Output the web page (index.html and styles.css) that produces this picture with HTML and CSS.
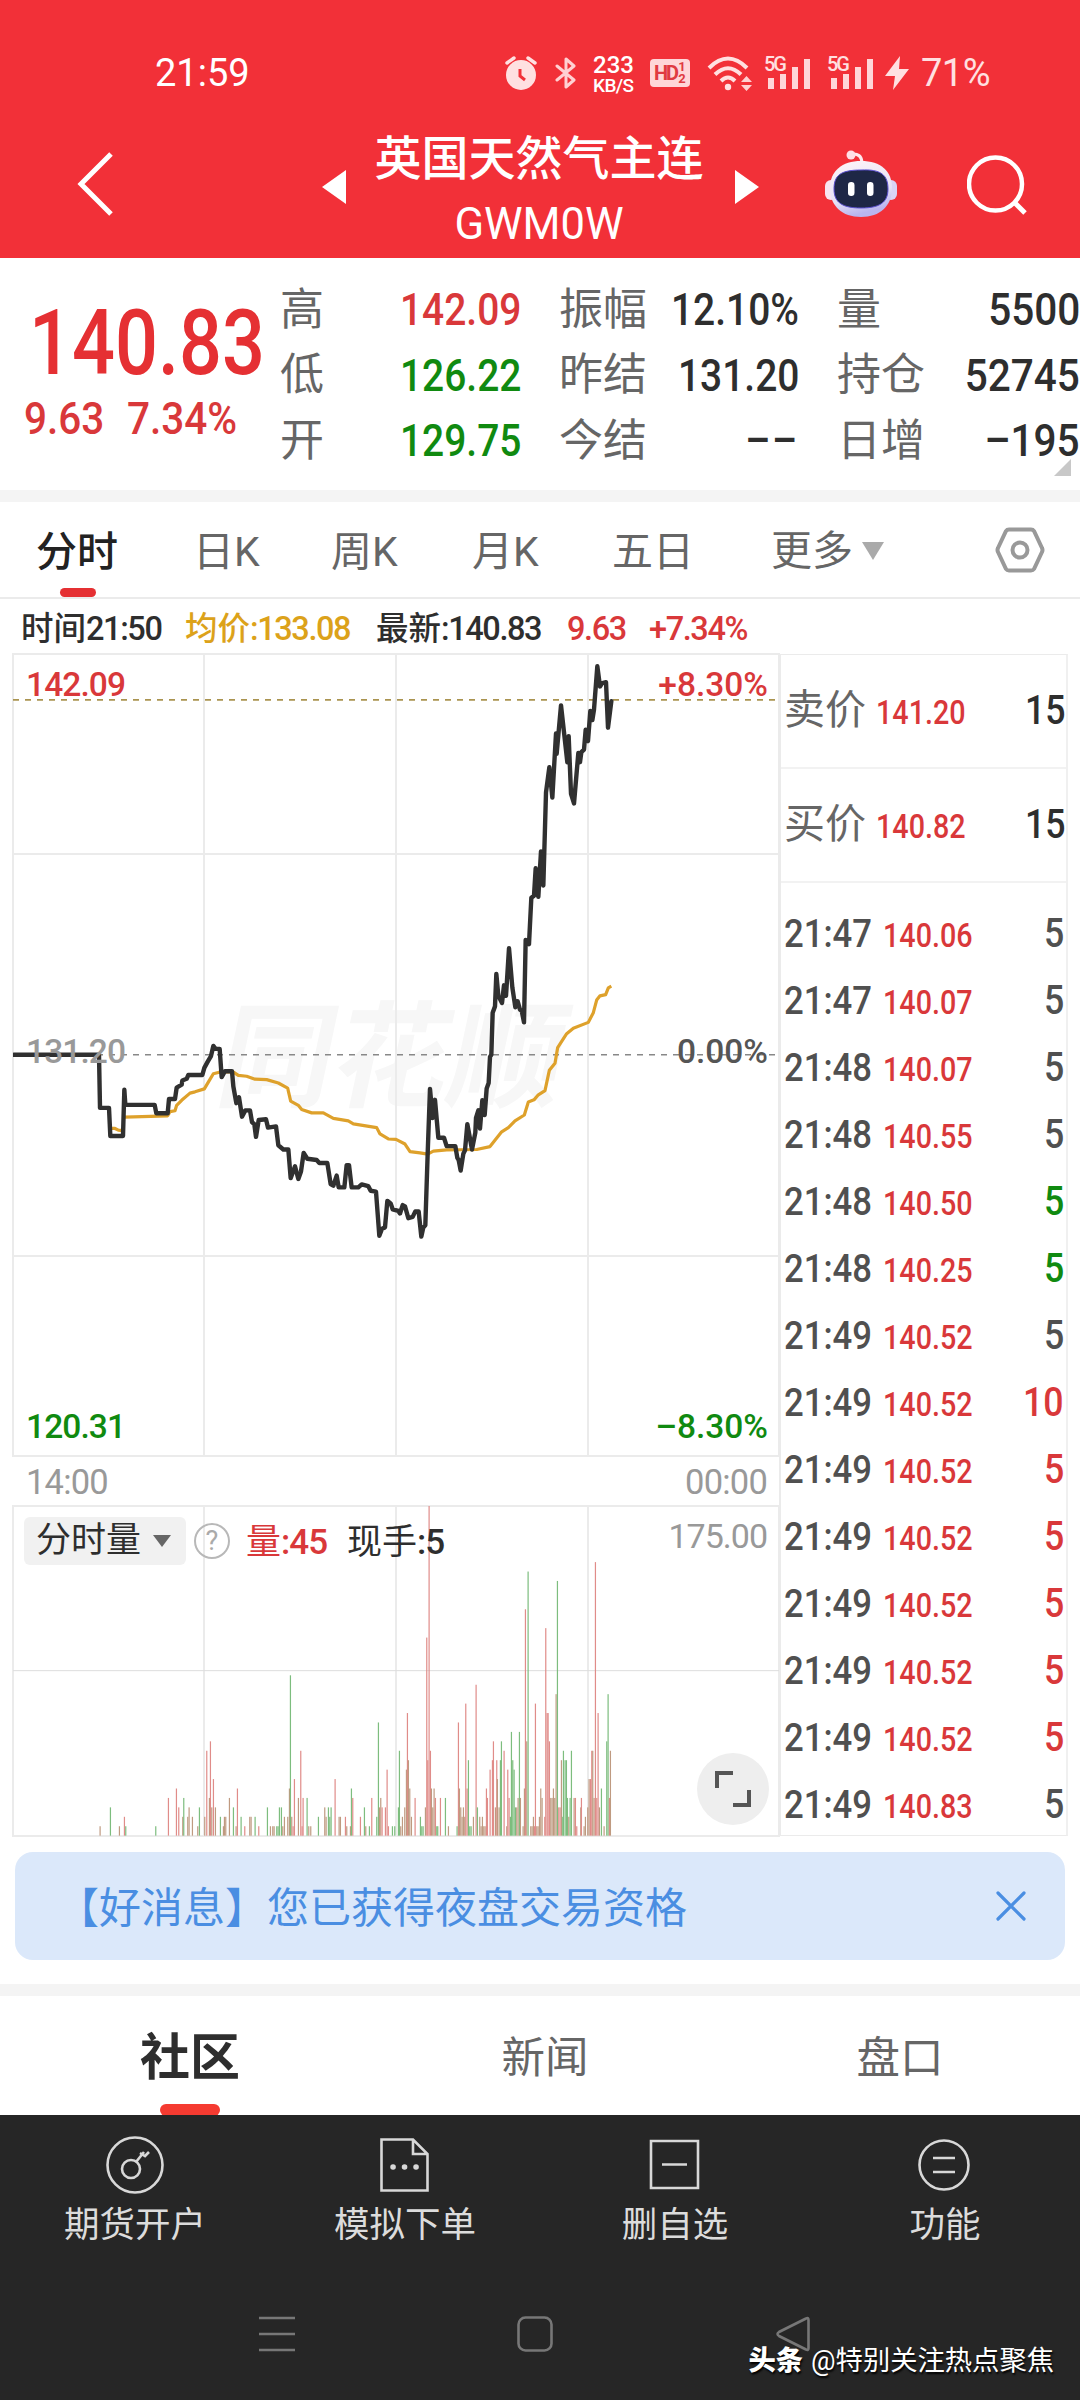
FILE: index.html
```html
<!DOCTYPE html>
<html lang="zh-CN">
<head>
    <meta charset="UTF-8">
    <meta name="viewport" content="width=device-width, initial-scale=1.0">
    <title>英国天然气主连 GWM0W</title>
    <link rel="stylesheet" href="styles.css">
</head>
<body>
    <header class="header">
        <div class="status-bar">
            <span class="status-time">21:59</span>
            <div class="status-icons">
                <svg class="ic-alarm" width="32" height="34" viewBox="0 0 32 34">
                    <circle cx="16" cy="19" r="15" fill="#ffe0e1"/>
                    <path d="M2 7L9 2M30 7L23 2" stroke="#ffe0e1" stroke-width="3.4" stroke-linecap="round"/>
                    <path d="M15 13v7l5 4" fill="none" stroke="#f23038" stroke-width="3"/>
                </svg>
                <svg class="ic-bt" width="22" height="34" viewBox="0 0 22 34">
                    <path d="M2 10L19 24L11 31V3L19 10L2 24" fill="none" stroke="#ffd0d2" stroke-width="3" stroke-linejoin="round" stroke-linecap="round"/>
                </svg>
                <div class="net-speed"><b>233</b><span>KB/S</span></div>
                <div class="hd-badge"><b>HD</b><span><i>1</i><i>2</i></span></div>
                <svg class="ic-wifi" width="46" height="36" viewBox="0 0 46 36">
                    <g fill="none" stroke="#ffe0e1" stroke-width="4">
                        <path d="M2 13Q21 -6 40 13"/>
                        <path d="M8 19.500Q21 7 34 19.500"/>
                        <path d="M14 26Q21 19 28 26"/>
                    </g>
                    <circle cx="21" cy="32" r="3.200" fill="#ffe0e1"/>
                    <path d="M34 27L39.500 21L45 27ZM34 30H45L39.500 36Z" fill="#ffd0d2"/>
                </svg>
                <div class="signal">
                    <span>5G</span>
                    <svg width="48" height="34" viewBox="0 0 48 34"><path d="M4 22h6v11H4zM16 18h6v15h-6zM28 11h6v22h-6zM40 3h6v30h-6z" fill="#ffd6d8"/></svg>
                </div>
                <div class="signal">
                    <span>5G</span>
                    <svg width="48" height="34" viewBox="0 0 48 34"><path d="M4 22h6v11H4zM16 18h6v15h-6zM28 11h6v22h-6zM40 3h6v30h-6z" fill="#ffd6d8"/></svg>
                </div>
                <svg class="ic-bolt" width="25" height="34" viewBox="0 0 25 34"><path d="M15 0L0 20H10L8 34L24 13H14Z" fill="#ffe0e1"/></svg>
                <span class="battery">71%</span>
            </div>
        </div>
        <div class="title-bar">
            <svg class="back" width="40" height="66" viewBox="0 0 40 66"><path d="M36 3L6 33L36 63" fill="none" stroke="#fff" stroke-width="5"/></svg>
            <svg class="prev" width="24" height="34" viewBox="0 0 24 34"><path d="M24 0V34L0 17Z" fill="#fff"/></svg>
            <div class="title">
                <h1>英国天然气主连</h1>
                <p>GWM0W</p>
            </div>
            <svg class="next" width="24" height="34" viewBox="0 0 24 34"><path d="M0 0V34L24 17Z" fill="#fff"/></svg>
            <svg class="robot" width="74" height="68" viewBox="0 0 74 68">
                <defs>
                    <linearGradient id="head" x1="0" y1="0" x2=".3" y2="1">
                        <stop offset="0" stop-color="#fff5f8"/>
                        <stop offset=".7" stop-color="#e6e2f6"/>
                        <stop offset="1" stop-color="#b9b5ef"/>
                    </linearGradient>
                </defs>
                <path d="M28 4Q37 3 38 12" fill="none" stroke="#ffe9ee" stroke-width="3"/>
                <circle cx="27" cy="5" r="4.500" fill="#ffdfe6"/>
                <rect x="1" y="30" width="12" height="20" rx="6" fill="#f8e4f0"/>
                <rect x="61" y="30" width="12" height="20" rx="6" fill="#d9d4f6"/>
                <path d="M37 11C57 11 68 21 68 38C68 56 56 67 37 67C18 67 6 56 6 38C6 21 18 11 37 11Z" fill="url(#head)"/>
                <path d="M37 20C57 19 64 25 64 39C64 53 55 58 37 58C19 58 10 53 10 39C10 25 17 20 37 20Z" fill="#1e2746" stroke="#5a4fd0" stroke-width="1"/>
                <rect x="24" y="32" width="6.500" height="14" rx="3.200" fill="#fff"/>
                <rect x="43" y="32" width="6.500" height="14" rx="3.200" fill="#fff"/>
            </svg>
            <svg class="search" width="62" height="62" viewBox="0 0 62 62">
                <circle cx="28.500" cy="29" r="26.500" fill="none" stroke="#fff" stroke-width="4.500"/>
                <path d="M47 47L58 58" stroke="#fff" stroke-width="5"/>
            </svg>
        </div>
    </header>

    <section class="quote">
        <div class="quote-price">
            <div class="last"><span>140.83</span></div>
            <div class="change"><span>9.63</span><span>7.34%</span></div>
        </div>
        <div class="quote-grid">
            <div class="cell"><label>高</label><span class="red">142.09</span></div>
            <div class="cell"><label>振幅</label><span>12.10%</span></div>
            <div class="cell"><label>量</label><span>5500</span></div>
            <div class="cell"><label>低</label><span class="green">126.22</span></div>
            <div class="cell"><label>昨结</label><span>131.20</span></div>
            <div class="cell"><label>持仓</label><span>52745</span></div>
            <div class="cell"><label>开</label><span class="green">129.75</span></div>
            <div class="cell"><label>今结</label><span class="empty">––</span></div>
            <div class="cell"><label>日增</label><span>–195</span></div>
        </div>
        <i class="corner"></i>
    </section>

    <nav class="period-tabs">
        <a class="active">分时</a>
        <a>日K</a>
        <a>周K</a>
        <a>月K</a>
        <a>五日</a>
        <a class="more">更多<i></i></a>
        <svg class="settings" width="50" height="46" viewBox="0 0 50 46">
            <path d="M14 2.500H36Q38 2.500 39 4L47 21Q48 23 47 25L39 42Q38 43.500 36 43.500H14Q12 43.500 11 42L3 25Q2 23 3 21L11 4Q12 2.500 14 2.500Z" fill="none" stroke="#999" stroke-width="4"/>
            <circle cx="25" cy="23" r="7.500" fill="none" stroke="#999" stroke-width="4"/>
        </svg>
    </nav>

    <div class="info-row">
        <span class="t-time">时间<b>21:50</b></span>
        <span class="t-avg">均价<b>:133.08</b></span>
        <span class="t-last">最新<b>:140.83</b></span>
        <span class="t-chg"><b>9.63</b></span>
        <span class="t-pct"><b>+7.34%</b></span>
    </div>

    <main class="board">
        <div class="charts">
            <div class="price-chart">
                <span class="logo-text">同花顺</span>
                <svg width="766" height="802" viewBox="39 33 2298 1905" preserveAspectRatio="none">
                    <g class="grid">
                        <path d="M612 33V1938M1188 33V1938M1764 33V1938M39 508H2337M39 1463H2337"/>
                    </g>
                    <path class="dash dash-last" d="M39 142H2337"/>
                    <path class="dash" d="M39 985H2337"/>
                    <path class="line-avg" d="M331 1160L345 1160 355 1164 368 1165M374 1133L503 1130 510 1120 525 1118 530 1105 545 1093 570 1076 585 1073 613 1066 625 1050 640 1030 655 1027 698 1025 715 1034 740 1036 765 1043 800 1044 835 1052 863 1064 872 1095 895 1105 905 1115 935 1123 970 1123 1000 1136 1045 1142 1060 1149 1130 1158 1140 1173 1165 1185 1188 1186 1215 1197 1230 1215 1260 1218 1283 1221 1300 1214 1340 1211 1430 1210 1470 1203 1505 1168 1525 1158 1545 1142 1573 1128 1585 1097 1602 1092 1615 1080 1635 1070 1648 1022 1665 1005 1673 968 1700 935 1720 922 1765 908 1780 885 1790 855 1800 845 1817 842 1825 826 1834 822"/>
                    <path class="line-price" d="M41 985L297 985 300 1111 327 1111 331 1178 369 1178 373 1068 376 1104 464 1104 469 1124 503 1124 507 1090 525 1090 530 1063 545 1056 547 1046 560 1042 565 1033 607 1033 613 1016 624 1000 633 988 640 964 647 971 659 971 665 1038 675 1024 696 1024 700 1060 709 1100 717 1086 726 1132 736 1117 750 1117 756 1145 763 1150 768 1180 776 1140 798 1138 804 1158 828 1155 835 1200 850 1210 865 1210 872 1278 885 1250 895 1280 903 1262 911 1218 922 1232 950 1235 958 1242 982 1242 992 1292 1000 1296 1010 1272 1016 1300 1033 1300 1040 1247 1047 1247 1055 1300 1075 1300 1085 1293 1105 1297 1112 1308 1128 1310 1138 1415 1146 1398 1155 1395 1162 1332 1172 1338 1178 1352 1195 1356 1200 1362 1208 1342 1215 1345 1225 1373 1238 1370 1246 1357 1256 1357 1264 1417 1270 1395 1276 1390 1283 1220 1290 1066 1298 1135 1305 1092 1315 1182 1332 1182 1340 1202 1366 1202 1372 1230 1376 1235 1382 1260 1390 1220 1395 1212 1402 1150 1416 1210 1426 1170 1428 1135 1435 1117 1440 1160 1447 1093 1454 1128 1460 1065 1466 1052 1470 990 1474 985 1478 885 1485 870 1489 793 1495 845 1506 862 1512 820 1518 845 1527 732 1537 825 1546 872 1553 858 1560 878 1565 880 1572 908 1577 712 1587 722 1594 612 1602 607 1607 542 1615 610 1623 502 1630 583 1638 362 1648 302 1657 374 1668 222 1670 270 1683 155 1702 290 1706 228 1713 365 1722 388 1735 268 1740 290 1744 266 1752 260 1757 213 1764 240 1771 168 1777 190 1782 165 1792 62 1800 110 1807 102 1818 100 1824 208 1834 145"/>
                </svg>
                <span class="label top left red">142.09</span>
                <span class="label top right red">+8.30%</span>
                <span class="label mid left gray">131.20</span>
                <span class="label mid right">0.00%</span>
                <span class="label bottom left green">120.31</span>
                <span class="label bottom right green">–8.30%</span>
            </div>
            <div class="time-axis"><span>14:00</span><span>00:00</span></div>
            <div class="volume-chart">
                <svg width="766" height="330" viewBox="39 317 2298 990">
                    <g class="grid">
                        <path d="M612 317V1307M1188 317V1307M1764 317V1307"/>
                        <path d="M39 811H2337" class="middle"/>
                    </g>
                    <g id="volumeBars"></g>
                </svg>
                <div class="volume-head">
                    <span class="select">分时量<i></i></span>
                    <span class="help">?</span>
                    <span class="vol red">量<b>:45</b></span>
                    <span class="hand">现手<b>:5</b></span>
                    <span class="max">175.00</span>
                </div>
                <div class="expand">
                    <svg width="36" height="36" viewBox="0 0 36 36"><path d="M2 17V2H18M34 19V34H18" fill="none" stroke="#555" stroke-width="4"/></svg>
                </div>
            </div>
        </div>
        <aside class="ticks">
            <div class="ask-bid"><label>卖价</label><span class="price">141.20</span><span class="qty">15</span></div>
            <div class="ask-bid"><label>买价</label><span class="price">140.82</span><span class="qty">15</span></div>
            <div class="tick-list" id="tickList"></div>
        </aside>
    </main>

    <div class="notice">
        <span>【好消息】您已获得夜盘交易资格</span>
        <svg width="30" height="30" viewBox="0 0 30 30"><path d="M2 2L28 28M28 2L2 28" stroke="#4a8ee2" stroke-width="3.200" stroke-linecap="round"/></svg>
    </div>

    <nav class="content-tabs">
        <a class="active">社区</a>
        <a>新闻</a>
        <a>盘口</a>
    </nav>

    <footer class="footer">
        <div class="actions">
            <a>
                <svg width="60" height="60" viewBox="0 0 60 60">
                    <circle cx="30" cy="30" r="27.500"/>
                    <circle cx="26" cy="34" r="9"/>
                    <path d="M31 27L39 17M35 18L40 21L44 17"/>
                </svg>
                期货开户
            </a>
            <a>
                <svg width="60" height="60" viewBox="0 0 60 60">
                    <path d="M6.500 4.500H38L52.500 19V55.500H6.500ZM38 4.500V19H52.500"/>
                    <path d="M18 32h.1M29.500 32h.1M41 32h.1" stroke-width="5.500" stroke-linecap="round"/>
                </svg>
                模拟下单
            </a>
            <a>
                <svg width="60" height="60" viewBox="0 0 60 60">
                    <path d="M6 6H53V53H6ZM17 29.500H42"/>
                </svg>
                删自选
            </a>
            <a>
                <svg width="60" height="60" viewBox="0 0 60 60">
                    <circle cx="29" cy="30" r="24.500"/>
                    <path d="M18 23H40M18 37H40"/>
                </svg>
                功能
            </a>
        </div>
        <div class="sys-nav">
            <svg width="36" height="40" viewBox="0 0 36 40"><path d="M0 4H36M0 20H36M0 36H36"/></svg>
            <svg width="38" height="40" viewBox="0 0 38 40"><rect x="2.500" y="3.500" width="33" height="33" rx="7"/></svg>
            <svg width="36" height="40" viewBox="0 0 36 40"><path d="M33.500 6V34Q33.500 37 31 35.500L4 22Q1 20 4 18L31 4.500Q33.500 3 33.500 6Z"/></svg>
        </div>
        <div class="credit"><b>头条</b>@特别关注热点聚焦</div>
    </footer>

    <script src="script.js"></script>
</body>
</html>
```
FILE: styles.css
```css
:root {
    --red: #d9383a;
    --header: #f23038;
    --green: #108a10;
    --dark: #2e2e2e;
    --gray: #666;
    --line: #ebebeb;
    --band: #f4f4f4;
}

* {
    box-sizing: border-box;
}

body {
    margin: 0;
    width: 1080px;
    height: 2400px;
    overflow: hidden;
    background: #fff;
    color: var(--dark);
    font-family: Roboto, "Noto Sans CJK SC", sans-serif;
    white-space: nowrap;
}

svg {
    display: block;
    flex: none;
}

i {
    font-style: normal;
}

.red { color: var(--red); }
.green { color: var(--green); }
.gray { color: #999; }

/* header */
.header {
    height: 258px;
    background: var(--header);
    color: #fff;
}

.status-bar {
    height: 120px;
    padding: 26px 84px 0 155px;
    display: flex;
    justify-content: space-between;
    align-items: center;
}

.status-time {
    font-size: 38px;
}

.status-icons {
    display: flex;
    align-items: center;
}

.ic-bt { margin-left: 18px; }
.ic-wifi { margin-left: 17px; }
.ic-bolt { margin-left: 10px; }

.net-speed {
    width: 44px;
    margin-left: 16px;
    padding-top: 2px;
    display: flex;
    flex-direction: column;
    font-size: 19px;
    line-height: 18px;
}

.net-speed b {
    font-size: 24px;
    font-weight: 500;
    line-height: 23px;
}

.net-speed span {
    font-weight: 500;
    letter-spacing: -0.6px;
}

.hd-badge {
    width: 40px;
    height: 28px;
    margin-left: 13px;
    padding-left: 4px;
    display: flex;
    align-items: center;
    gap: 1px;
    border-radius: 4px;
    background: #ffd6d8;
    color: #e03a41;
    font-size: 20px;
}

.hd-badge b {
    letter-spacing: -2px;
}

.hd-badge span {
    display: flex;
    flex-direction: column;
    font-size: 13px;
    line-height: 12px;
    font-weight: 700;
}

.signal {
    position: relative;
    margin-left: 11px;
}

.signal + .signal {
    margin-left: 15px;
}

.signal span {
    position: absolute;
    left: 0;
    top: 0;
    font-size: 20px;
    font-weight: 500;
    line-height: 17px;
    letter-spacing: -2px;
    color: #ffe0e1;
}

.battery {
    width: 75px;
    margin-left: 11px;
    font-size: 38px;
    letter-spacing: -0.5px;
    color: #ffe0e1;
}

.title-bar {
    height: 138px;
    padding: 9px 51px 0 75px;
    display: flex;
    align-items: flex-start;
}

.back { margin-top: 22px; }
.prev { margin: 41px 0 0 207px; }
.next { margin: 41px 0 0 0; }
.robot { margin: 21px 0 0 65px; }
.search { margin: 26px 0 0 69px; }

.title {
    flex: none;
    width: 389px;
    padding-right: 3px;
    text-align: center;
}

.title h1 {
    margin: 0;
    font-size: 47px;
    font-weight: 500;
    line-height: 60px;
}

.title p {
    margin: 8px 0 0;
    font-size: 43.5px;
    line-height: 56px;
}

/* quote summary */
.quote {
    position: relative;
    height: 244px;
    padding-top: 19px;
    display: flex;
    border-bottom: 12px solid var(--band);
}

.quote-price {
    width: 280px;
    color: #e53033;
    font-weight: 500;
}

.quote-price span {
    display: inline-block;
    transform: scaleX(.9);
    transform-origin: left;
}

.last {
    padding: 21px 0 0 29px;
    font-size: 90px;
    line-height: 92px;
    height: 119px;
}

.quote-price .last span {
    transform: scaleX(.84);
}

.change {
    display: flex;
    padding-left: 24px;
    font-size: 45px;
    line-height: 46px;
    color: var(--red);
}

.change span:first-child {
    width: 103px;
}

.quote-grid {
    display: grid;
    grid-template-columns: 241px 240px 243px;
    grid-auto-rows: 65.5px;
    column-gap: 38px;
}

.cell {
    display: flex;
    justify-content: space-between;
    align-items: center;
}

.cell label {
    font-size: 44px;
    line-height: 64px;
    color: var(--gray);
}

.cell span {
    font-size: 45px;
    font-weight: 500;
    transform: scaleX(.865);
    transform-origin: right;
}

.cell:nth-child(3n) span {
    transform: scaleX(.9);
}

.cell .empty {
    letter-spacing: 2px;
}

.corner {
    position: absolute;
    right: 9px;
    top: 201px;
    border-left: 17px solid transparent;
    border-bottom: 17px solid #c8c8c8;
}

/* period tabs */
.period-tabs {
    height: 97px;
    padding: 0 35px 0 36px;
    display: flex;
    align-items: center;
    border-bottom: 2px solid var(--line);
    font-size: 41px;
    color: var(--gray);
}

.period-tabs a {
    position: relative;
    height: 97px;
    line-height: 102px;
}

.period-tabs a:nth-child(1) { width: 157px; }
.period-tabs a:nth-child(2) { width: 138px; }
.period-tabs a:nth-child(3) { width: 141px; }
.period-tabs a:nth-child(4) { width: 140px; }
.period-tabs a:nth-child(5) { width: 159px; }

.period-tabs .active {
    color: #222;
    font-weight: 500;
}

.period-tabs .active::after {
    content: "";
    position: absolute;
    left: 24px;
    bottom: 1px;
    width: 36px;
    height: 9px;
    border-radius: 5px;
    background: #e53033;
}

.period-tabs .more {
    display: flex;
    align-items: center;
    gap: 9px;
    line-height: 60px;
    padding-top: 3px;
}

.more i {
    border: 11px solid transparent;
    border-top: 18px solid #aaa;
    border-bottom: 0;
}

.settings {
    margin-left: auto;
}

.info-row {
    height: 55px;
    padding-left: 21px;
    display: flex;
    font-size: 32.5px;
    line-height: 60px;
    font-weight: 500;
}

.info-row b {
    font-weight: 500;
    letter-spacing: -1.4px;
}

.t-time { width: 164px; }
.t-avg { width: 191px; color: #dca21a; }
.t-last { width: 191px; }
.t-chg { width: 82px; color: var(--red); }
.t-pct { color: var(--red); }

/* charts */
.board {
    display: flex;
    height: 1182px;
    padding-left: 13px;
}

.charts {
    width: 766px;
}

.price-chart {
    position: relative;
    height: 802px;
    outline: 2px solid var(--line);
    outline-offset: -1px;
}

.price-chart svg,
.volume-chart svg {
    position: relative;
}

.grid path {
    fill: none;
    stroke: var(--line);
    stroke-width: 2px;
    vector-effect: non-scaling-stroke;
}

.grid .middle {
    stroke: #ddd;
    stroke-width: 1px;
}

.dash,
.line-avg,
.line-price {
    fill: none;
    vector-effect: non-scaling-stroke;
    stroke-linejoin: round;
}

.dash {
    stroke: #888;
    stroke-width: 1.6px;
    stroke-dasharray: 6 6;
}

.dash-last { stroke: #aa9450; }

.line-avg {
    stroke: #dea12b;
    stroke-width: 3.2px;
}

.line-price {
    stroke: #303030;
    stroke-width: 4.4px;
    stroke-linecap: round;
}

.logo-text {
    position: absolute;
    left: 208px;
    top: 340px;
    font-size: 115px;
    line-height: 130px;
    font-weight: 700;
    color: #f7f7f7;
    transform: skewX(-12deg);
}

.label {
    position: absolute;
    font-size: 33.5px;
    line-height: 40px;
    font-weight: 500;
    letter-spacing: -0.9px;
    color: #555;
}

.label.red { color: var(--red); }
.label.green { color: var(--green); }
.label.gray { color: #999; }
.label.left { left: 13px; }
.label.right { right: 11px; letter-spacing: 0; }
.label.top { top: 11px; }
.label.mid { top: 378px; }
.label.bottom { bottom: 9px; }

.time-axis {
    height: 50px;
    padding: 0 12px 0 13px;
    display: flex;
    justify-content: space-between;
    font-size: 34.5px;
    line-height: 52px;
    letter-spacing: -0.8px;
    color: #999;
}

.volume-chart {
    position: relative;
    height: 330px;
    outline: 2px solid var(--line);
    outline-offset: -1px;
}

.bar-r { fill: #e08c89; }
.bar-g { fill: #7dbd7e; }
.bar-n { fill: #bf9a80; }

.volume-head {
    position: absolute;
    left: 11px;
    right: 12px;
    top: 11px;
    height: 48px;
    display: flex;
    align-items: center;
    font-size: 35px;
    line-height: 52px;
}

.volume-head b {
    font-weight: 500;
    letter-spacing: -1px;
}

.select {
    width: 162px;
    height: 48px;
    padding-left: 12px;
    display: flex;
    align-items: center;
    gap: 12px;
    border-radius: 6px;
    background: #f1f1f1;
}

.select i {
    border: 9px solid transparent;
    border-top: 12px solid #666;
    border-bottom: 0;
}

.help {
    width: 36px;
    height: 36px;
    margin-left: 8px;
    border: 2px solid #b8b8b8;
    border-radius: 50%;
    font-size: 27px;
    line-height: 33px;
    text-align: center;
    color: #aaa;
}

.vol,
.hand {
    padding-top: 3px;
}

.vol { margin-left: 16px; width: 101px; }

.max {
    align-self: flex-start;
    margin: -7px 0 0 auto;
    font-size: 34px;
    letter-spacing: -1px;
    color: #999;
}

.expand {
    position: absolute;
    right: 10px;
    bottom: 11px;
    width: 72px;
    height: 72px;
    display: flex;
    align-items: center;
    justify-content: center;
    border-radius: 50%;
    background: #eee;
}

/* trades column */
.ticks {
    width: 289px;
    height: 1182px;
    border: 2px solid var(--line);
    border-width: 1px 2px 1px 2px;
    border-right-color: #f0f0f0;
}

.ask-bid {
    height: 114px;
    padding: 0 3px;
    display: flex;
    align-items: baseline;
    line-height: 111px;
    border-bottom: 2px solid #f2f2f2;
}

.ask-bid label {
    width: 92px;
    font-size: 41px;
    color: var(--gray);
}

.price {
    font-size: 33px;
    font-weight: 500;
    color: var(--red);
    transform: scaleX(.87);
    transform-origin: left;
}

.qty {
    margin-left: auto;
    font-size: 41px;
    font-weight: 500;
    transform: scaleX(.87);
    transform-origin: right;
}

.ask-bid .qty {
    margin-right: -3px;
}

.tick-list {
    padding-top: 17px;
}

.tick {
    height: 67px;
    padding: 0 2px 0 3px;
    display: flex;
    align-items: baseline;
    line-height: 67px;
}

.tick .time {
    width: 99px;
    font-size: 39px;
    font-weight: 500;
    color: #505050;
    transform: scaleX(.89);
    transform-origin: left;
}

.tick .qty {
    color: #505050;
}

.tick .qty.red { color: var(--red); }
.tick .qty.green { color: var(--green); }

/* notice */
.notice {
    height: 108px;
    margin: 16px 15px 24px;
    padding: 0 39px 0 42px;
    display: flex;
    align-items: center;
    justify-content: space-between;
    border-radius: 18px;
    background: #dbe8fa;
    color: #4a8ee2;
    font-size: 42px;
}

.notice span {
    padding-bottom: 3px;
}

.content-tabs {
    height: 131px;
    display: flex;
    border-top: 12px solid var(--band);
    font-size: 43.5px;
    line-height: 125px;
    color: var(--gray);
}

.content-tabs a {
    position: relative;
    flex: none;
    height: 119px;
    text-align: center;
}

.content-tabs a:nth-child(1) { width: 380px; }
.content-tabs a:nth-child(2) { width: 330px; }
.content-tabs a:nth-child(3) { width: 370px; padding-left: 10px; }

.content-tabs .active {
    color: var(--dark);
    font-size: 50px;
    font-weight: 600;
}

.content-tabs .active::after {
    content: "";
    position: absolute;
    left: 160px;
    bottom: -1px;
    width: 60px;
    height: 12px;
    border-radius: 6px;
    background: #f53b31;
}

/* footer */
.footer {
    position: relative;
    height: 285px;
    background: #262626;
}

.actions {
    display: flex;
    padding-top: 20px;
}

.actions a {
    width: 270px;
    height: 118px;
    display: flex;
    flex-direction: column;
    align-items: center;
    color: #dcdcdc;
    font-size: 35.5px;
    line-height: 60px;
}

.actions svg {
    fill: none;
    stroke: #d8d8d8;
    stroke-width: 2.6;
}

.sys-nav {
    padding: 61px 269px 0 259px;
    display: flex;
    justify-content: space-between;
}

.sys-nav svg {
    fill: none;
    stroke: #777;
    stroke-width: 2.6;
}

.credit {
    position: absolute;
    right: 26px;
    bottom: 19px;
    font-size: 27.3px;
    line-height: 40px;
    color: #fff;
    text-shadow: 1px 2px 2px #000;
}

.credit b {
    margin-right: 8px;
    font-weight: 900;
}
```
FILE: script.js
```js
// recent trades: time, price, lots, colour
const ticks = [
    ['21:47', '140.06', 5, ''],
    ['21:47', '140.07', 5, ''],
    ['21:48', '140.07', 5, ''],
    ['21:48', '140.55', 5, ''],
    ['21:48', '140.50', 5, 'green'],
    ['21:48', '140.25', 5, 'green'],
    ['21:49', '140.52', 5, ''],
    ['21:49', '140.52', 10, 'red'],
    ['21:49', '140.52', 5, 'red'],
    ['21:49', '140.52', 5, 'red'],
    ['21:49', '140.52', 5, 'red'],
    ['21:49', '140.52', 5, 'red'],
    ['21:49', '140.52', 5, 'red'],
    ['21:49', '140.83', 5, '']
];

document.getElementById('tickList').innerHTML = ticks.map(t =>
    `<div class="tick"><span class="time">${t[0]}</span><span class="price">${t[1]}</span><span class="qty ${t[3]}">${t[2]}</span></div>`
).join('');

// volume bars: x, steps of 5 lots, colour (r up, g down, n flat)
const volumes = '300:1n 331:3g 358:1n 373:2r 377:1g 467:1g 505:4r 529:5r 536:3r 548:2n 551:4g 563:2n 567:3n 577:2n 593:1n 598:3g ' +
    '614:2n 620:9r 628:4n 631:10r 635:3n 640:6r 646:3n 661:2g 670:1n 673:2n 677:2n 688:4n 700:3g 708:1n 712:5r 723:2g 734:1r 749:2n 753:2n ' +
    '765:2g 776:1r 802:3g 811:1n 818:1n 822:1n 830:1g 834:1g 838:3g 844:3g 848:1n 853:2n 863:2n 868:5n 871:17g 875:2n 879:1r 883:6r 895:4n ' +
    '902:9r 906:1r 909:4r 921:4g 926:1n 932:1n 955:2g 974:3n 978:2n 985:3g 989:2g 993:3g 1005:6r 1017:2n 1021:2n 1036:2r 1040:1n 1051:1n ' +
    '1054:5g 1058:4r 1081:2r 1093:3g 1097:1n 1108:1g 1115:4r 1130:2g 1135:12g 1138:3n 1142:4n 1146:3r 1156:3r 1161:7r 1165:1r 1177:1g 1184:1g ' +
    '1195:3g 1198:9g 1202:1n 1207:2n 1214:3n 1219:7n 1222:13r 1225:8n 1229:5n 1234:2n 1245:4r 1261:2g 1265:1g 1269:1g 1276:3n 1280:21r ' +
    '1283:8r 1287:35r 1291:9r 1294:5n 1298:3n 1302:5n 1306:4r 1310:1g 1313:1g 1321:4r 1336:4g 1345:1n 1371:1g 1375:12r 1378:5n 1382:3n 1386:2n ' +
    '1390:3n 1394:2n 1397:14r 1401:5r 1405:8g 1409:1g 1413:1g 1420:2n 1428:16r 1432:3g 1439:2n 1443:1n 1447:2n 1451:1n 1455:1n 1459:5r 1462:4r ' +
    '1470:7r 1477:8r 1480:10r 1486:3n 1490:8r 1492:6n 1497:3n 1501:8g 1504:10g 1512:9r 1520:1n 1523:7r 1527:4r 1531:2g 1534:11g 1538:8g 1542:7g ' +
    '1546:3g 1550:3n 1554:4n 1558:11g 1561:4n 1569:1n 1573:5n 1576:24r 1580:10n 1584:28g 1592:1n 1596:1n 1600:2n 1603:1r 1606:14r 1610:1n 1614:1n ' +
    '1618:2n 1622:5n 1626:4n 1634:2r 1637:22r 1641:13r 1644:13r 1648:10r 1652:4n 1656:4n 1660:5n 1664:4n 1668:15n 1672:27g 1676:3r 1680:3r ' +
    '1684:8n 1688:2g 1690:9g 1695:8g 1699:8g 1702:4g 1706:2n 1710:4g 1714:9g 1722:4n 1726:4r 1730:1r 1742:3n 1744:4r 1752:1n 1756:2n 1763:3n ' +
    '1767:6n 1771:6r 1775:9r 1778:9n 1782:4n 1786:29r 1790:4r 1794:13r 1798:3n 1804:5g 1812:1n 1820:10g 1824:15g 1828:4r 1831:9n';

document.getElementById('volumeBars').innerHTML = volumes.split(' ').map(v => {
    const [x, rest] = v.split(':');
    const h = parseInt(rest) * 28.3;
    return `<rect class="bar-${rest.slice(-1)}" x="${x - 1.5}" y="${(1306 - h).toFixed(1)}" width="3.6" height="${h.toFixed(1)}"/>`;
}).join('');
```
